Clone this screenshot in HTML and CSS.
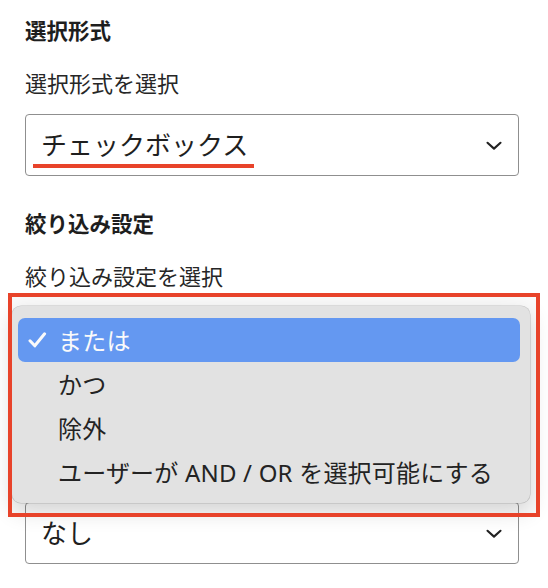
FILE: index.html
```html
<!DOCTYPE html>
<html lang="ja">
<head>
<meta charset="utf-8">
<link rel="stylesheet" href="styles.css">
</head>
<body>
<div class="form">
  <div class="field-title">選択形式</div>
  <div class="field-label">選択形式を選択</div>
  <div class="select">
    <span class="value marked">チェックボックス</span>
    <svg class="chev" width="16" height="10" viewBox="0 0 16 10"><path d="M1.5 1.8 L8 7.6 L14.5 1.8" fill="none" stroke="#222" stroke-width="2.1" stroke-linecap="round" stroke-linejoin="round"/></svg>
  </div>

  <div class="field-title second">絞り込み設定</div>
  <div class="field-label">絞り込み設定を選択</div>
  <div class="select focused"></div>
  <div class="select third">
    <span class="value">なし</span>
    <svg class="chev" width="16" height="10" viewBox="0 0 16 10"><path d="M1.5 1.8 L8 7.6 L14.5 1.8" fill="none" stroke="#222" stroke-width="2.1" stroke-linecap="round" stroke-linejoin="round"/></svg>
  </div>
</div>

<div class="menu">
  <div class="item active">
    <svg class="check" width="19" height="16" viewBox="0 0 19 16"><path d="M2 8.8 L6.8 13.8 L16.6 1.8" fill="none" stroke="#fff" stroke-width="3" stroke-linecap="round" stroke-linejoin="round"/></svg>
    <span>または</span>
  </div>
  <div class="item"><span>かつ</span></div>
  <div class="item"><span>除外</span></div>
  <div class="item"><span>ユーザーが AND / OR を選択可能にする</span></div>
</div>
<div class="highlight-box"></div>
</body>
</html>
```

FILE: styles.css
```css
html, body {
  margin: 0;
  padding: 0;
  background: #ffffff;
}

body {
  width: 548px;
  height: 588px;
  overflow: hidden;
  position: relative;
  font-family: "Noto Sans", "Noto Sans CJK JP", sans-serif;
  color: #222222;
}

.form {
  display: flex;
  flex-direction: column;
  padding: 15px 29px 0 25px;
}

.field-title {
  font-family: "Noto Sans CJK JP", sans-serif;
  font-weight: 700;
  font-size: 21.5px;
  line-height: 30px;
  color: #1e1e1e;
}

.field-title.second {
  margin-top: 32px;
}

.field-label {
  font-family: "Noto Sans CJK JP", sans-serif;
  font-size: 22px;
  line-height: 30px;
  margin-top: 22px;
  color: #262626;
}

.select {
  margin-top: 17px;
  height: 62px;
  box-sizing: border-box;
  border: 1.6px solid #8f8f8f;
  border-radius: 4px;
  display: flex;
  align-items: center;
  justify-content: space-between;
  padding: 0 16px 0 15px;
  background: #ffffff;
}

.select.focused {
  margin-top: 18px;
  border-top: 2px solid #235d98;
}

.select.third {
  margin-top: 132px;
}

.value {
  font-family: "Noto Sans CJK JP", sans-serif;
  font-size: 26px;
  line-height: 32px;
  color: #1f1f1f;
  position: relative;
  top: -1px;
}

.marked::after {
  content: "";
  position: absolute;
  left: -8px;
  right: -6px;
  bottom: -8px;
  height: 4px;
  background: #e8432a;
}

.chev {
  display: block;
  margin-top: 2px;
}

.menu {
  position: absolute;
  left: 12px;
  top: 306px;
  width: 518px;
  height: 197px;
  box-sizing: border-box;
  padding: 12px 10px 0 6px;
  background: #e7e7e7;
  border-radius: 9px;
  box-shadow: 0 0 0 0.6px rgba(0, 0, 0, 0.18), 0 8px 22px rgba(0, 0, 0, 0.16);
  display: flex;
  flex-direction: column;
}

.item {
  height: 44px;
  display: flex;
  align-items: center;
  padding-left: 40px;
  border-radius: 7px;
  font-size: 24px;
  letter-spacing: 0.2px;
  color: #242424;
  position: relative;
}

.item span {
  position: relative;
  top: -1px;
}

.item.active {
  background: #679cf6;
  color: #ffffff;
}

.check {
  position: absolute;
  left: 10px;
  top: 14px;
}

.highlight-box {
  position: absolute;
  left: 8px;
  top: 293px;
  width: 532px;
  height: 224px;
  box-sizing: border-box;
  border: 4px solid #e8432a;
  background: rgba(0, 0, 0, 0.02);
}
```
